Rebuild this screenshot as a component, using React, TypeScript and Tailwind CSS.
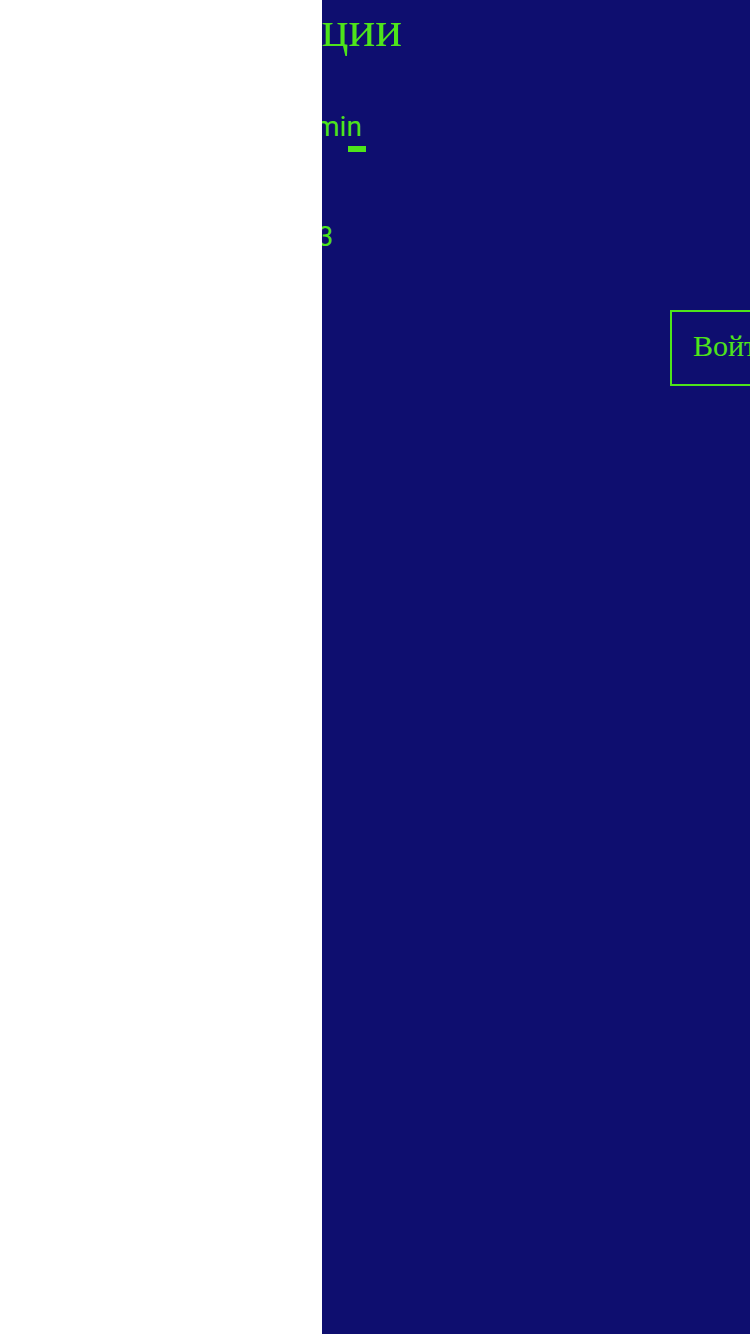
import React from 'react';

const green = 'text-[#4ee41a]';

const App = () => {
  return (
    <div className="flex h-[1334px] w-[750px] overflow-hidden">
      {/* left white panel */}
      <div className="w-[322px] shrink-0 bg-white" />

      {/* login panel, content runs off its edges */}
      <div className="relative flex-1 overflow-hidden bg-[#0e0e6f]">
        <div className="ml-[-38px] flex w-[118px] justify-end">
          <h1
            className={`whitespace-nowrap text-[50px] leading-[58px] font-normal ${green}`}
            style={{ fontFamily: '"Liberation Serif", serif' }}
          >
            Страница авторизации
          </h1>
        </div>

        <div className="ml-[-38px] mt-[53px] flex flex-col" style={{ fontFamily: 'Roboto, sans-serif' }}>
          <div className={`whitespace-nowrap text-[28px] leading-[32px] ${green}`}>admin</div>
          <div className="ml-[64px] mt-[3px] h-[6px] w-[18px] bg-[#4ee41a]" />
          <div className={`ml-[2px] mt-[69px] whitespace-nowrap text-[28px] leading-[32px] ${green}`}>123</div>
        </div>

        <div className="mt-[57px] flex pl-[348px]">
          <button
            className={`h-[76px] shrink-0 whitespace-nowrap border-2 border-[#4ee41a] px-[21px] pt-[17px] pb-[21px] text-[30px] leading-[32px] ${green}`}
            style={{ fontFamily: '"Liberation Serif", serif' }}
          >
            Войти
          </button>
        </div>
      </div>
    </div>
  );
};

export default App;
